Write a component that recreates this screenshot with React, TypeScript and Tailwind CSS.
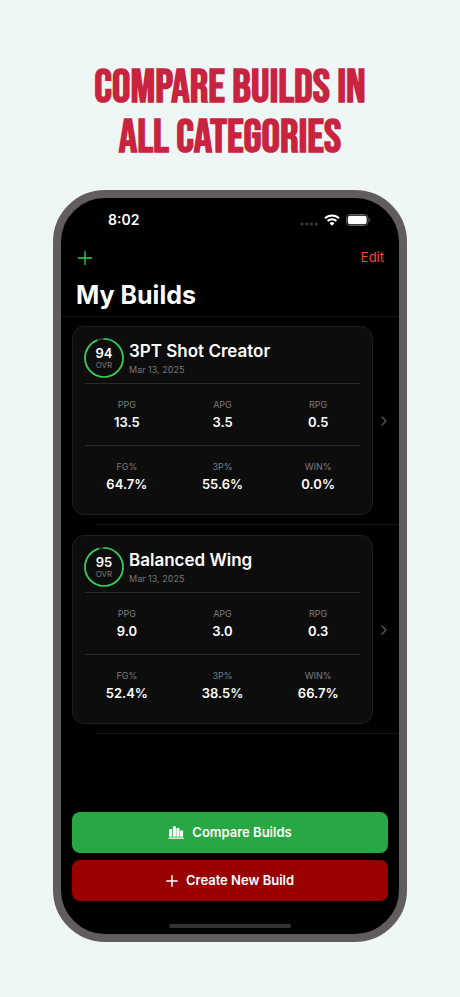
import { ChevronRight } from "lucide-react";

type Stat = { label: string; value: string };

type Build = {
  name: string;
  date: string;
  overall: number;
  averages: Stat[];
  percentages: Stat[];
};

const builds: Build[] = [
  {
    name: "3PT Shot Creator",
    date: "Mar 13, 2025",
    overall: 94,
    averages: [
      { label: "PPG", value: "13.5" },
      { label: "APG", value: "3.5" },
      { label: "RPG", value: "0.5" },
    ],
    percentages: [
      { label: "FG%", value: "64.7%" },
      { label: "3P%", value: "55.6%" },
      { label: "WIN%", value: "0.0%" },
    ],
  },
  {
    name: "Balanced Wing",
    date: "Mar 13, 2025",
    overall: 95,
    averages: [
      { label: "PPG", value: "9.0" },
      { label: "APG", value: "3.0" },
      { label: "RPG", value: "0.3" },
    ],
    percentages: [
      { label: "FG%", value: "52.4%" },
      { label: "3P%", value: "38.5%" },
      { label: "WIN%", value: "66.7%" },
    ],
  },
];

function StatusBar() {
  return (
    <div className="flex h-11 items-center justify-between pr-7 pl-[47px]">
      <span className="text-sm font-semibold">8:02</span>
      <div className="flex items-center gap-1.5">
        <svg width="18" height="12" viewBox="0 0 18 12" fill="#3a3a3c" aria-hidden="true">
          <circle cx="2" cy="10" r="1.6" />
          <circle cx="6.7" cy="10" r="1.6" />
          <circle cx="11.4" cy="10" r="1.6" />
          <circle cx="16.1" cy="10" r="1.6" />
        </svg>
        <svg width="16" height="12" viewBox="0 0 16 12" fill="none" stroke="#fff" strokeWidth="2.1" aria-hidden="true">
          <path d="M1 4.3a10 10 0 0 1 14 0" />
          <path d="M3.6 7.1a6.2 6.2 0 0 1 8.8 0" />
          <path d="M8 11.8 5.6 9.3a3.4 3.4 0 0 1 4.8 0z" fill="#fff" stroke="none" />
        </svg>
        <svg width="25" height="12" viewBox="0 0 25 12" aria-hidden="true">
          <rect x="0.5" y="0.5" width="21.5" height="11" rx="3.4" fill="none" stroke="#5c5c5e" />
          <rect x="1.8" y="1.8" width="18.9" height="8.4" rx="2.3" fill="#fff" />
          <path d="M23.2 4.2c1.5.5 1.5 3.1 0 3.6z" fill="#5c5c5e" />
        </svg>
      </div>
    </div>
  );
}

function OverallRing({ value }: { value: number }) {
  return (
    <div className="grid size-10 shrink-0 place-items-center">
      <svg viewBox="0 0 40 40" className="col-start-1 row-start-1 size-10 -rotate-90" fill="none" strokeWidth="1.7" aria-hidden="true">
        <circle cx="20" cy="20" r="19" stroke="#3a3a3c" />
        <circle
          cx="20"
          cy="20"
          r="19"
          stroke="#30d158"
          pathLength="100"
          strokeDasharray={`${value} 100`}
          strokeLinecap="round"
        />
      </svg>
      <div className="col-start-1 row-start-1 text-center">
        <p className="text-[13px] leading-[14px] font-semibold">{value}</p>
        <p className="text-[8px] leading-[10px] text-[#77777a]">OVR</p>
      </div>
    </div>
  );
}

function StatRow({ stats }: { stats: Stat[] }) {
  return (
    <dl className="grid grid-cols-3 px-1.5 pt-3.5 pb-[13px] text-center">
      {stats.map((stat) => (
        <div key={stat.label}>
          <dt className="text-[9px] leading-[14px] text-[#7c7c80]">{stat.label}</dt>
          <dd className="text-[13px] leading-5 font-semibold">{stat.value}</dd>
        </div>
      ))}
    </dl>
  );
}

function BuildItem({ build }: { build: Build }) {
  return (
    <li>
      <div className="flex items-center py-[9px] pl-[11px]">
        <article className="min-w-0 flex-1 rounded-xl border border-[#1f1f20] bg-[#0d0d0d] pb-[7px]">
          <header className="flex items-center gap-[5px] px-[11px] pt-[11px] pb-[5px]">
            <OverallRing value={build.overall} />
            <div className="pt-0.5">
              <h3 className="text-[17px] leading-[22px] font-semibold">{build.name}</h3>
              <p className="text-[9px] leading-4 text-[#77777a]">{build.date}</p>
            </div>
          </header>
          <hr className="mx-3 border-[#29292a]" />
          <StatRow stats={build.averages} />
          <hr className="mx-3 border-[#29292a]" />
          <StatRow stats={build.percentages} />
        </article>
        <ChevronRight className="mr-1.5 ml-0.5 h-4 w-[18px] shrink-0 text-[#555558]" strokeWidth={2.2} aria-hidden="true" />
      </div>
      <hr className="ml-[35px] border-[#161617]" />
    </li>
  );
}

export default function App() {
  return (
    <main className="flex min-h-screen flex-col bg-[#eef6f6] px-[53px] pt-16 pb-[55px] font-['Inter','Liberation_Sans',sans-serif]">
      <h1 className="text-center font-['Bebas_Neue','Oswald','Liberation_Sans',sans-serif] text-[46px] leading-[50px] font-bold whitespace-nowrap text-[#c9243f]">
        COMPARE BUILDS IN
        <br />
        ALL CATEGORIES
      </h1>

      <section className="mt-[26px] flex flex-1 flex-col rounded-[52px] border-8 border-[#625d5d] bg-black text-white">
        <StatusBar />

        <nav className="flex h-[31px] items-center justify-between pr-[15px] pl-4">
          <button type="button" aria-label="Add build">
            <svg width="16" height="16" viewBox="0 0 16 16" stroke="#30d158" strokeWidth="1.3" strokeLinecap="round" aria-hidden="true">
              <path d="M8 1.5v13M1.5 8h13" />
            </svg>
          </button>
          <button type="button" className="text-[13px] text-[#ff453a]">
            Edit
          </button>
        </nav>

        <h2 className="px-[15px] pt-1 text-[25px] leading-9 font-bold">My Builds</h2>

        <ul className="mt-[3px] space-y-px border-t border-[#141414]">
          {builds.map((build) => (
            <BuildItem key={build.name} build={build} />
          ))}
        </ul>

        <div className="mt-auto flex flex-col gap-[7px] px-[11px] pb-[23px]">
          <button type="button" className="flex h-[41px] items-center justify-center gap-2 rounded-lg bg-[#28a745] text-[13px] font-semibold">
            <svg width="16" height="13" viewBox="0 0 16 13" fill="#fff" aria-hidden="true">
              <rect x="1" y="3" width="3.1" height="7.8" rx="0.7" />
              <rect x="4.8" y="0.2" width="3.1" height="10.6" rx="0.7" />
              <rect x="8.4" y="2" width="3.1" height="8.8" rx="0.7" />
              <rect x="12" y="4.4" width="3.1" height="6.4" rx="0.7" />
              <rect x="0.4" y="11.4" width="15.4" height="1.4" rx="0.6" />
            </svg>
            Compare Builds
          </button>
          <button type="button" className="flex h-[41px] items-center justify-center gap-2 rounded-lg bg-[#990000] text-[13px] font-semibold">
            <svg width="12" height="12" viewBox="0 0 12 12" stroke="#fff" strokeWidth="1.5" strokeLinecap="round" aria-hidden="true">
              <path d="M6 0.8v10.4M0.8 6h10.4" />
            </svg>
            Create New Build
          </button>
        </div>

        <div className="mx-auto mb-1.5 h-1 w-[122px] rounded-full bg-[#323233]" />
      </section>
    </main>
  );
}
